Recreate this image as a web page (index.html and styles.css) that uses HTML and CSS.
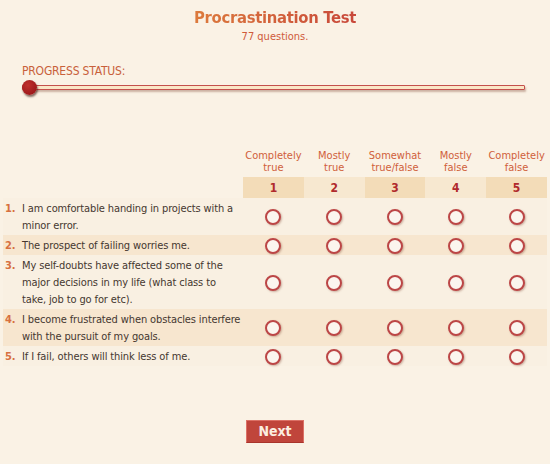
FILE: index.html
```html
<!DOCTYPE html>
<html>
<head>
<meta charset="utf-8">
<link rel="stylesheet" href="styles.css">
</head>
<body>
<div class="page">
  <header class="head">
    <h1 class="title">Procrastination Test</h1>
    <p class="subtitle">77 questions.</p>
  </header>
  <section class="progress">
    <div class="progress-label">PROGRESS STATUS:</div>
    <div class="track">
      <span class="knob"></span>
    </div>
  </section>
  <table class="quiz">
    <thead>
      <tr class="labels">
        <th class="qcol"></th>
        <th>Completely<br>true</th>
        <th>Mostly<br>true</th>
        <th>Somewhat<br>true/false</th>
        <th>Mostly<br>false</th>
        <th>Completely<br>false</th>
      </tr>
      <tr class="nums">
        <th class="qcol blank"></th>
        <th class="dark">1</th>
        <th class="light">2</th>
        <th class="dark">3</th>
        <th class="light">4</th>
        <th class="dark">5</th>
      </tr>
    </thead>
    <tbody>
      <tr class="odd">
        <td class="q"><span class="n">1.</span><span class="t">I am comfortable handing in projects with a minor error.</span></td>
        <td><span class="radio"></span></td><td><span class="radio"></span></td><td><span class="radio"></span></td><td><span class="radio"></span></td><td><span class="radio"></span></td>
      </tr>
      <tr class="even">
        <td class="q"><span class="n">2.</span><span class="t">The prospect of failing worries me.</span></td>
        <td><span class="radio"></span></td><td><span class="radio"></span></td><td><span class="radio"></span></td><td><span class="radio"></span></td><td><span class="radio"></span></td>
      </tr>
      <tr class="odd">
        <td class="q"><span class="n">3.</span><span class="t">My self-doubts have affected some of the major decisions in my life (what class to take, job to go for etc).</span></td>
        <td><span class="radio"></span></td><td><span class="radio"></span></td><td><span class="radio"></span></td><td><span class="radio"></span></td><td><span class="radio"></span></td>
      </tr>
      <tr class="even">
        <td class="q"><span class="n">4.</span><span class="t">I become frustrated when obstacles interfere with the pursuit of my goals.</span></td>
        <td><span class="radio"></span></td><td><span class="radio"></span></td><td><span class="radio"></span></td><td><span class="radio"></span></td><td><span class="radio"></span></td>
      </tr>
      <tr class="odd">
        <td class="q"><span class="n">5.</span><span class="t">If I fail, others will think less of me.</span></td>
        <td><span class="radio"></span></td><td><span class="radio"></span></td><td><span class="radio"></span></td><td><span class="radio"></span></td><td><span class="radio"></span></td>
      </tr>
    </tbody>
  </table>
  <div class="actions">
    <button class="next">Next</button>
  </div>
</div>
</body>
</html>
```

FILE: styles.css
```css
html, body {
  margin: 0;
  padding: 0;
  background: #faf2e5;
}
body {
  font-family: "DejaVu Sans Condensed", "DejaVu Sans", sans-serif;
  font-size: 11px;
  color: #45372f;
}
.page {
  width: 550px;
  height: 464px;
  box-sizing: border-box;
  padding-top: 8px;
}
.head {
  text-align: center;
}
.title {
  margin: 0;
  font-size: 16.5px;
  letter-spacing: -0.3px;
  line-height: 20px;
  font-weight: bold;
  color: #d2603a;
  background: linear-gradient(90deg, #dc7a3c, #c8483a);
  -webkit-background-clip: text;
  background-clip: text;
  -webkit-text-fill-color: transparent;
  display: inline-block;
}
.subtitle {
  margin: 2px 0 0;
  font-size: 11px;
  line-height: 13px;
  color: #cf5a3a;
}
.progress {
  padding: 21px 25px 0 22px;
}
.progress-label {
  font-size: 12px;
  line-height: 14px;
  color: #c8603a;
  letter-spacing: -0.2px;
}
.track {
  position: relative;
  margin-top: 7px;
  height: 3px;
  border: 1px solid #c4504c;
  background: #fbe6c6;
  box-shadow: 1px 2px 2px rgba(120, 60, 40, 0.35);
  border-radius: 1px;
}
.knob {
  position: absolute;
  left: -1px;
  top: -6px;
  width: 15px;
  height: 15px;
  border-radius: 50%;
  background: radial-gradient(circle at 40% 35%, #c0302c, #9e1a1c 70%);
  box-shadow: 1px 2px 2px rgba(60, 20, 10, 0.6);
}
.quiz {
  margin: 60px 0 0 3px;
  border-collapse: collapse;
  table-layout: fixed;
  width: 544px;
}
.quiz th, .quiz td {
  padding: 0;
}
.qcol {
  width: 240px;
}
.labels th {
  font-weight: normal;
  color: #d0603a;
  line-height: 11.5px;
  vertical-align: bottom;
  padding-bottom: 4px;
  text-align: center;
}
.nums th {
  height: 21px;
  font-weight: bold;
  font-size: 12px;
  color: #b02a2c;
  text-align: center;
}
.nums .dark { background: #f3dcb8; }
.nums .light { background: #f7e8d0; }
.nums .blank { background: transparent; }
.quiz tbody td {
  text-align: center;
  vertical-align: middle;
  line-height: 17px;
}
.odd { background: #f9f0e2; }
.even { background: #f7e6cf; }
.quiz td.q {
  text-align: left;
  display: flex;
  padding: 2px 0 1px;
  letter-spacing: -0.12px;
}
.n {
  width: 17px;
  flex: none;
  padding-left: 2px;
  color: #d77040;
  font-weight: bold;
}
.t {
  flex: 1;
  padding-right: 2px;
}
.radio {
  display: inline-block;
  width: 12px;
  height: 12px;
  border: 2px solid #bc4646;
  border-radius: 50%;
  background: #fbf5ee;
  box-shadow: 1px 1px 2px rgba(120, 60, 40, 0.35);
  vertical-align: middle;
}
.actions {
  text-align: center;
  margin-top: 54px;
}
.next {
  font-family: "DejaVu Sans Condensed", "DejaVu Sans", sans-serif;
  font-weight: bold;
  font-size: 14px;
  line-height: 17px;
  color: #fbeee0;
  background: #c0453b;
  border: 1px solid #dc7166;
  border-bottom-color: #a8352c;
  padding: 2px 11px 2px;
  cursor: pointer;
}
```
